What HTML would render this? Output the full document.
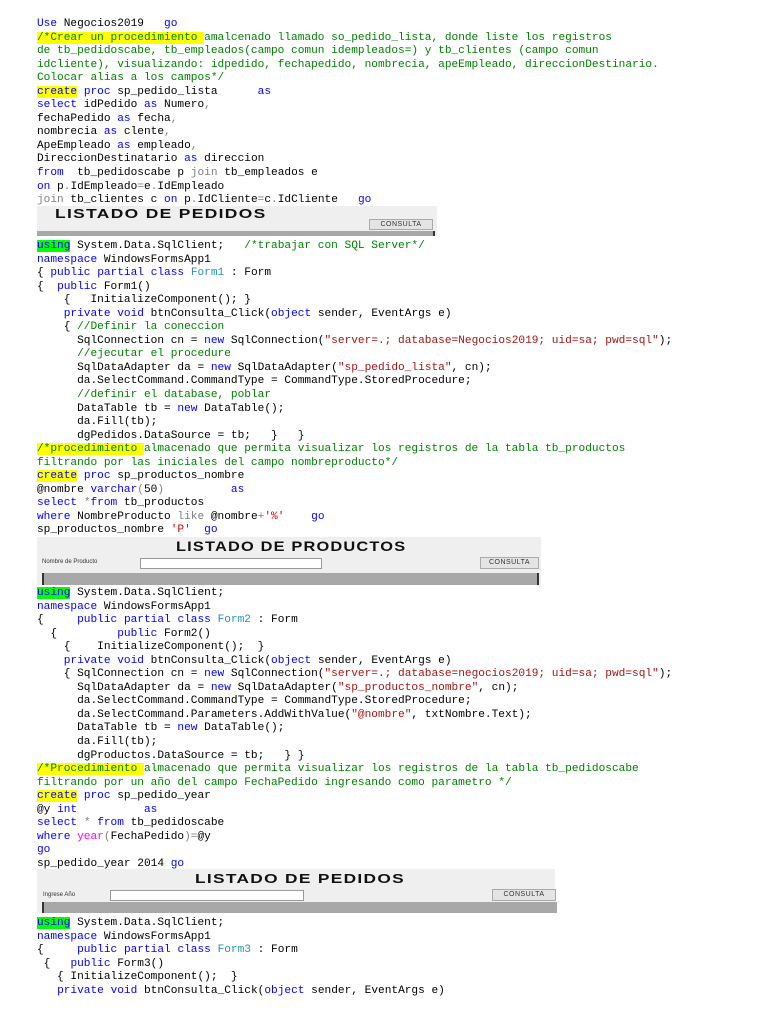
<!DOCTYPE html>
<html><head><meta charset="utf-8"><style>
body{margin:0;background:#fff;width:768px;height:1024px;position:relative;overflow:hidden}
pre{position:absolute;left:37px;margin:0;font-family:"Liberation Mono",monospace;font-size:11.15px;line-height:13.55px;color:#000;white-space:pre}
.k{color:#0000ff}.c{color:#008000}.s{color:#a31515}.t{color:#2b91af}.g{color:#808080}.m{color:#ff00ff}.r{color:#e00000}
.y{background:#ffff00}.gh{background:#00ff00}
.img{position:absolute;background:#efefef;font-family:"Liberation Sans",sans-serif}
.ttl{position:absolute;font-weight:bold;color:#111;white-space:nowrap;letter-spacing:1px;transform-origin:0 0}
.btn{position:absolute;background:#e4e4e4;border:1px solid #aaa;font-size:7px;color:#333;text-align:center;letter-spacing:.5px}
.inp{position:absolute;background:#fff;border:1px solid #999}
.bar{position:absolute;background:#a8a8a8;border-left:2px solid #333;border-right:2px solid #333}
.lbl{position:absolute;font-size:6px;color:#333;white-space:nowrap}
</style></head><body>
<pre style="top:18px"><span class="k">Use</span> Negocios2019   <span class="k">go</span>
<span class="c"><span class="y">/*Crear un procedimiento </span>amalcenado llamado so_pedido_lista, donde liste los registros</span>
<span class="c">de tb_pedidoscabe, tb_empleados(campo comun idempleados=) y tb_clientes (campo comun</span>
<span class="c">idcliente), visualizando: idpedido, fechapedido, nombrecia, apeEmpleado, direccionDestinario.</span>
<span class="c">Colocar alias a los campos*/</span>
<span class="k y">create</span> <span class="k">proc</span> sp_pedido_lista      <span class="k">as</span>
<span class="k">select</span> idPedido <span class="k">as</span> Numero<span class="g">,</span>
fechaPedido <span class="k">as</span> fecha<span class="g">,</span>
nombrecia <span class="k">as</span> clente<span class="g">,</span>
ApeEmpleado <span class="k">as</span> empleado<span class="g">,</span>
DireccionDestinatario <span class="k">as</span> direccion
<span class="k">from</span>  tb_pedidoscabe p <span class="g">join</span> tb_empleados e
<span class="k">on</span> p<span class="g">.</span>IdEmpleado<span class="g">=</span>e<span class="g">.</span>IdEmpleado
<span class="g">join</span> tb_clientes c <span class="k">on</span> p<span class="g">.</span>IdCliente<span class="g">=</span>c<span class="g">.</span>IdCliente   <span class="k">go</span></pre>

<div class="img" style="left:37px;top:206px;width:400px;height:30px">
<div class="ttl" style="left:18px;top:0px;font-size:13px;transform:scaleX(1.34)">LISTADO DE PEDIDOS</div>
<div class="btn" style="left:332px;top:13px;width:62px;height:9px;line-height:9px">CONSULTA</div>
<div class="bar" style="left:0;top:25px;width:396px;height:5px;border-left:none"></div>
</div>

<pre style="top:240px"><span class="k gh">using</span> System.Data.SqlClient;   <span class="c">/*trabajar con SQL Server*/</span>
<span class="k">namespace</span> WindowsFormsApp1
{ <span class="k">public</span> <span class="k">partial</span> <span class="k">class</span> <span class="t">Form1</span> : Form
{  <span class="k">public</span> Form1()
    {   InitializeComponent(); }
    <span class="k">private</span> <span class="k">void</span> btnConsulta_Click(<span class="k">object</span> sender, EventArgs e)
    { <span class="c">//Definir la coneccion</span>
      SqlConnection cn = <span class="k">new</span> SqlConnection(<span class="s">"server=.; database=Negocios2019; uid=sa; pwd=sql"</span>);
      <span class="c">//ejecutar el procedure</span>
      SqlDataAdapter da = <span class="k">new</span> SqlDataAdapter(<span class="s">"sp_pedido_lista"</span>, cn);
      da.SelectCommand.CommandType = CommandType.StoredProcedure;
      <span class="c">//definir el database, poblar</span>
      DataTable tb = <span class="k">new</span> DataTable();
      da.Fill(tb);
      dgPedidos.DataSource = tb;   }   }
<span class="c"><span class="y">/*procedimiento </span>almacenado que permita visualizar los registros de la tabla tb_productos</span>
<span class="c">filtrando por las iniciales del campo nombreproducto*/</span>
<span class="k y">create</span> <span class="k">proc</span> sp_productos_nombre
@nombre <span class="k">varchar</span><span class="g">(</span>50<span class="g">)</span>          <span class="k">as</span>
<span class="k">select</span> <span class="g">*</span><span class="k">from</span> tb_productos
<span class="k">where</span> NombreProducto <span class="g">like</span> @nombre<span class="g">+</span><span class="r">'%'</span>    <span class="k">go</span>
sp_productos_nombre <span class="r">'P'</span>  <span class="k">go</span></pre>

<div class="img" style="left:37px;top:537px;width:504px;height:48px">
<div class="ttl" style="left:139px;top:1px;font-size:14px;transform:scaleX(1.17)">LISTADO DE PRODUCTOS</div>
<div class="lbl" style="left:5px;top:22px">Nombre de Producto</div>
<div class="inp" style="left:103px;top:21px;width:180px;height:9px"></div>
<div class="btn" style="left:443px;top:20px;width:57px;height:10px;line-height:10px">CONSULTA</div>
<div class="bar" style="left:5px;top:36px;width:493px;height:12px"></div>
</div>

<pre style="top:587px"><span class="k gh">using</span> System.Data.SqlClient;
<span class="k">namespace</span> WindowsFormsApp1
{     <span class="k">public</span> <span class="k">partial</span> <span class="k">class</span> <span class="t">Form2</span> : Form
  {         <span class="k">public</span> Form2()
    {    InitializeComponent();  }
    <span class="k">private</span> <span class="k">void</span> btnConsulta_Click(<span class="k">object</span> sender, EventArgs e)
    { SqlConnection cn = <span class="k">new</span> SqlConnection(<span class="s">"server=.; database=negocios2019; uid=sa; pwd=sql"</span>);
      SqlDataAdapter da = <span class="k">new</span> SqlDataAdapter(<span class="s">"sp_productos_nombre"</span>, cn);
      da.SelectCommand.CommandType = CommandType.StoredProcedure;
      da.SelectCommand.Parameters.AddWithValue(<span class="s">"@nombre"</span>, txtNombre.Text);
      DataTable tb = <span class="k">new</span> DataTable();
      da.Fill(tb);
      dgProductos.DataSource = tb;   } }
<span class="c"><span class="y">/*Procedimiento </span>almacenado que permita visualizar los registros de la tabla tb_pedidoscabe</span>
<span class="c">filtrando por un año del campo FechaPedido ingresando como parametro */</span>
<span class="k y">create</span> <span class="k">proc</span> sp_pedido_year
@y <span class="k">int</span>          <span class="k">as</span>
<span class="k">select</span> <span class="g">*</span> <span class="k">from</span> tb_pedidoscabe
<span class="k">where</span> <span class="m">year</span><span class="g">(</span>FechaPedido<span class="g">)=</span>@y
<span class="k">go</span>
sp_pedido_year 2014 <span class="k">go</span></pre>

<div class="img" style="left:37px;top:869px;width:518px;height:44px">
<div class="ttl" style="left:158px;top:2px;font-size:13px;transform:scaleX(1.33)">LISTADO DE PEDIDOS</div>
<div class="lbl" style="left:6px;top:23px">Ingrese Año</div>
<div class="inp" style="left:73px;top:21px;width:192px;height:9px"></div>
<div class="btn" style="left:455px;top:20px;width:62px;height:10px;line-height:10px">CONSULTA</div>
<div class="bar" style="left:5px;top:33px;width:513px;height:11px;border-right:none"></div>
</div>

<pre style="top:917px"><span class="k gh">using</span> System.Data.SqlClient;
<span class="k">namespace</span> WindowsFormsApp1
{     <span class="k">public</span> <span class="k">partial</span> <span class="k">class</span> <span class="t">Form3</span> : Form
 {   <span class="k">public</span> Form3()
   { InitializeComponent();  }
   <span class="k">private</span> <span class="k">void</span> btnConsulta_Click(<span class="k">object</span> sender, EventArgs e)</pre>
</body></html>
